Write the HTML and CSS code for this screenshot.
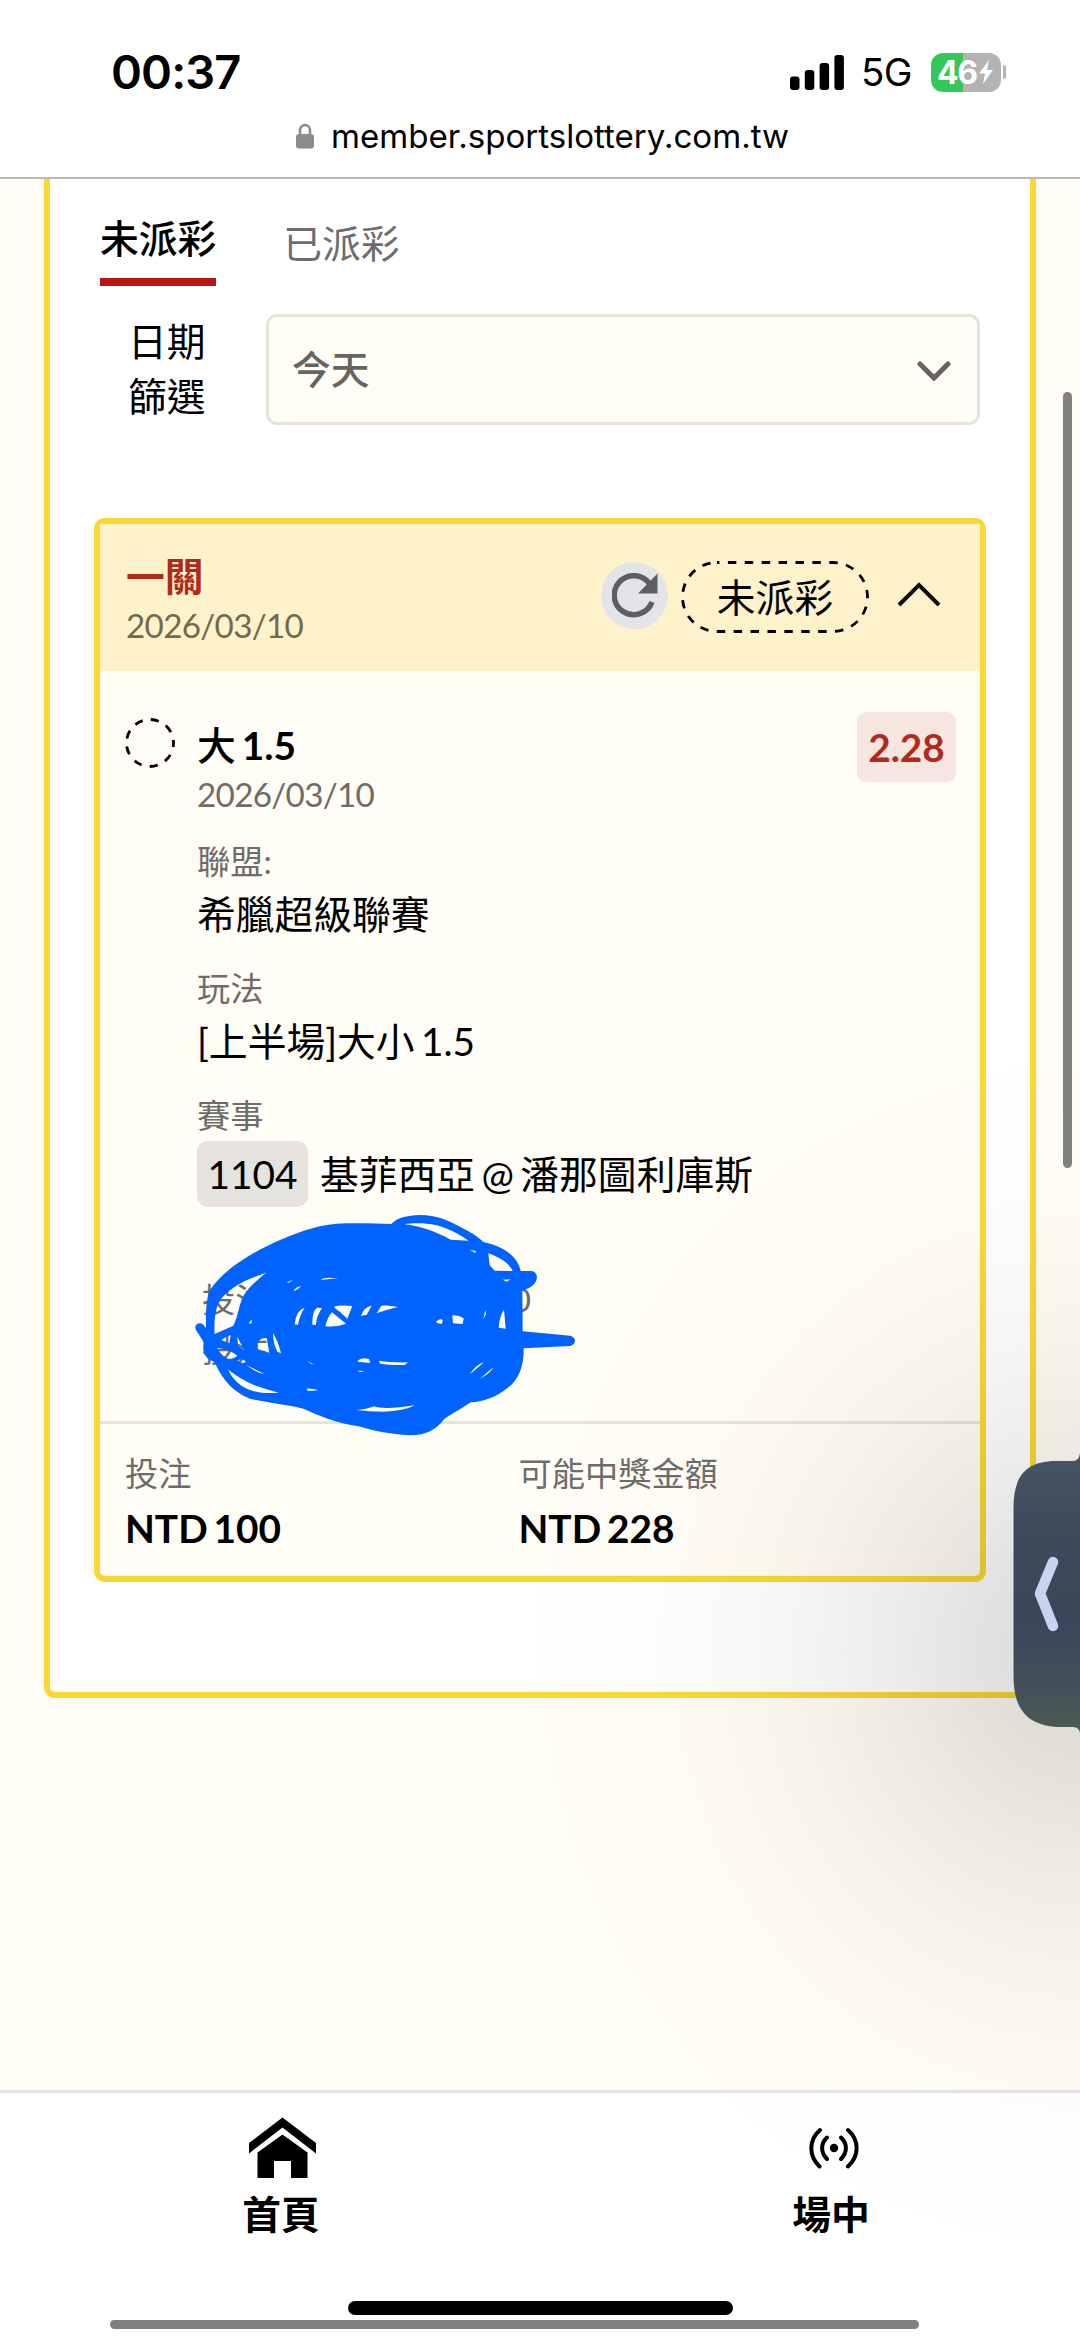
FILE: index.html
```html
<!DOCTYPE html>
<html lang="zh-Hant">
<head>
<meta charset="utf-8">
<title>投注紀錄</title>
<link rel="stylesheet" href="styles.css">
</head>
<body>
<div class="screen">
  <header class="browser">
    <div class="status">
      <span class="clock">00:37</span>
      <div class="status-right">
        <svg class="signal" viewBox="0 0 54 35"><rect x="0" y="21.5" width="9.5" height="13.5" rx="3"/><rect x="14.8" y="15" width="9.5" height="20" rx="3"/><rect x="29.6" y="8" width="9.5" height="27" rx="3"/><rect x="44.4" y="0" width="9.5" height="35" rx="3"/></svg>
        <span class="network">5G</span>
        <div class="battery">
          <span class="level">46</span>
          <svg class="bolt" viewBox="0 0 16 26"><path d="M11 1 1 14.5h6L5 25 15 11H9z" fill="#fff"/></svg>
        </div>
        <i class="nub"></i>
      </div>
    </div>
    <div class="address">
      <svg class="lock" viewBox="0 0 18 26"><path d="M4 12V7.5a5 5.5 0 0 1 10 0V12" fill="none" stroke="#8b8a8f" stroke-width="2.6"/><rect y="11" width="18" height="14.5" rx="3" fill="#8b8a8f"/></svg>
      <span class="url">member.sportslottery.com.tw</span>
    </div>
  </header>

  <main class="page">
    <section class="panel">
      <nav class="tabs">
        <a class="tab active">未派彩</a>
        <a class="tab">已派彩</a>
      </nav>
      <div class="filter">
        <span class="filter-label">日期<br>篩選</span>
        <div class="select">
          <span>今天</span>
          <svg class="caret" viewBox="0 0 34 20"><path d="M3 3 17 17 31 3" fill="none" stroke="#666461" stroke-width="5" stroke-linecap="round"/></svg>
        </div>
      </div>

      <article class="card">
        <div class="card-head">
          <div class="card-title">
            <strong>一關</strong>
            <span class="date">2026/03/10</span>
          </div>
          <span class="refresh"><svg viewBox="0 0 46 46"><path d="M38 11.5A19.5 19.5 0 1 0 40 29" fill="none" stroke="#5d5e60" stroke-width="5.500"/><path d="M45.5.5V20.500H26z" fill="#5d5e60"/></svg></span>
          <span class="pill"><svg viewBox="0 0 188 72"><rect x="1.500" y="1.500" width="185" height="69" rx="34.500" fill="none" stroke="#000" stroke-width="2.800" stroke-dasharray="8.450 8.450" stroke-dashoffset="6"/></svg>未派彩</span>
          <svg class="collapse" viewBox="0 0 44 25"><path d="M2 23 22 3 42 23" fill="none" stroke="#0b0a05" stroke-width="4"/></svg>
        </div>
        <div class="card-body">
          <svg class="pending" viewBox="0 0 50 50"><circle cx="25" cy="25" r="23.500" fill="none" stroke="#000" stroke-width="2.800" stroke-dasharray="8.200 8.200" stroke-dashoffset="4"/></svg>
          <div class="details">
            <strong class="pick"><span class="medium">大</span> 1.5</strong>
            <span class="date">2026/03/10</span>
            <span class="label first">聯盟:</span>
            <span class="value">希臘超級聯賽</span>
            <span class="label">玩法</span>
            <span class="value">[上半場]大小 1.5</span>
            <span class="label">賽事</span>
            <div class="match"><span class="code">1104</span><span>基菲西亞 @ 潘那圖利庫斯</span></div>
            <div class="meta">
              <div class="meta-row"><span>投注</span><span>0</span></div>
              <div class="meta-row"><span>投注</span></div>
              <svg class="scribble" viewBox="0 0 1320 780">
                <path class="ink" fill-rule="evenodd" d="M120 300C160 240 240 190 330 150C400 120 450 105 500 101C560 98 620 101 664 102C680 84 710 76 750 75C800 75 830 90 870 110C900 125 925 140 940 156C1000 168 1044 200 1052 243L1085 243C1105 247 1105 270 1090 284C1080 294 1066 298 1057 302L1058 424L1200 437C1220 441 1220 464 1200 468L1061 475C1062 530 1046 570 1010 596C976 622 940 635 902 637C870 660 836 675 820 690C800 717 770 736 720 736C660 732 606 722 566 709C500 700 446 676 400 656C350 644 290 638 240 626C180 602 155 560 133 516C105 505 96 490 101 456L78 420C70 405 86 393 100 404L108 414C107 360 109 325 120 300Z
                M288 248C230 268 170 295 145 340C134 370 132 400 134 432L190 407C208 370 205 345 222 315C238 290 262 270 288 248Z
                M704 103C750 107 800 126 842 149L896 152C850 120 810 104 770 101C746 99 720 100 704 103Z
                M955 190C990 202 1018 220 1028 243L974 242L959 226Z
                M900 180L918 183L916 189Z
                M998 269L1022 268L1010 275Z
                M452 270Q462 260 505 265Q475 267 452 270Z
                M372 300Q380 290 394 288Q386 297 372 303Z M350 277L370 269L356 278Z
                M374 403Q378 360 404 353Q390 372 384 404Z
                M427 404Q426 362 442 353L456 354Q438 380 438 405Z
                M486 367L528 401Q500 412 466 409Q472 382 486 367Z
                M494 349Q516 345 547 348L532 386Q512 365 494 354Z
                M573 378Q582 350 605 347L590 374Z M620 370L634 347Q660 345 684 351Q650 359 620 370Z
                M798 396Q806 384 818 389L816 401Q806 403 798 396Z M847 376Q865 374 881 385L878 402L849 400Z
                M986 413Q988 380 1002 359L1007 416Z M940 388L946 360L948 372Z
                M236 400L246 388L244 401Z
                M154 450Q170 438 182 436L178 460Z
                M202 440L222 480L204 468Z M262 460Q272 442 290 444L298 488Q276 482 262 477Z
                M309 430Q323 450 333 490L322 485Q309 460 309 430Z
                M142 474Q178 478 202 497Q185 512 170 505Q150 492 142 474Z M203 512Q217 502 229 516L218 520Z
                M175 539Q212 568 250 584Q288 598 326 608C280 612 244 606 215 588Q184 564 175 539Z M229 525L283 552Q260 549 229 525Z
                M563 512Q574 500 597 507L601 519L564 515Z M627 512Q660 518 714 517L704 525Q660 526 630 521Z
                M560 542L585 543L572 546Z M409 596Q420 594 446 601L414 603Z M411 512L433 525L422 521Z M486 522L523 534Z
                M558 660Q590 658 612 649Q630 657 690 652L735 646Q700 664 640 665Q600 665 558 660Z
                M899 553Q916 526 942 516Q928 530 899 553Z M930 566Q954 545 971 531Q960 551 930 566Z"/>
              </svg>
            </div>
          </div>
          <span class="odds">2.28</span>
        </div>
        <footer class="card-foot">
          <div class="sum"><span class="label">投注</span><strong>NTD 100</strong></div>
          <div class="sum"><span class="label">可能中獎金額</span><strong>NTD 228</strong></div>
        </footer>
      </article>
    </section>
  </main>

  <nav class="bottom">
    <a class="bottom-item">
      <svg class="home" viewBox="0 0 67 60"><path d="M33.500 0 67 25.500V36L33.500 10 0 36V25.500zM33.500 17 58.500 35V60.500H42V43.500H25V60.500H8.500V35z"/></svg>
      <span>首頁</span>
    </a>
    <a class="bottom-item">
      <svg class="live" viewBox="0 0 50 42"><circle cx="25" cy="21" r="4.200"/><g fill="none" stroke="#000" stroke-width="4" stroke-linecap="round"><path d="M11 3C-.5 13-.5 29 10.500 39.500M39 3c11.500 10 11.500 26 0 36.500M18 10.500c-6.500 6-6.500 15 0 21.500M32 10.500c6.500 6 6.500 15 0 21.500"/></g></svg>
      <span>場中</span>
    </a>
  </nav>

  <div class="shade"></div>
  <svg class="drawer" viewBox="0 0 67 280">
    <defs><linearGradient id="g" x1="0" y1="0" x2="0" y2="1"><stop offset="0" stop-color="#475461"/><stop offset=".3" stop-color="#3c4a5c"/><stop offset=".6" stop-color="#3a4759"/><stop offset=".83" stop-color="#42505b"/><stop offset="1" stop-color="#4d5c4f"/></linearGradient></defs>
    <path d="M67 0Q66 8 60 8H43C12 8 .5 24 .5 55V222C.5 258 15 271 43 274H60Q66 274 67 280Z" fill="url(#g)"/>
    <path d="M40 109 27 140.500 40 173" fill="none" stroke="#c8d5f0" stroke-width="10.500" stroke-linecap="round" stroke-linejoin="round"/>
  </svg>
  <i class="thumb-y"></i>
  <i class="home-bar"></i>
  <i class="thumb-x"></i>
</div>
</body>
</html>
```

FILE: styles.css
```css
* { box-sizing: border-box; }

body {
  margin: 0;
  background: #fffdf5;
  color: #000;
  font-family: Lato, "Noto Sans CJK TC", sans-serif;
  word-spacing: -3.5px;
}

.screen {
  position: relative;
  display: flex;
  flex-direction: column;
  width: 1080px;
  height: 2337px;
  overflow: hidden;
}

svg { display: block; flex: none; }
i { display: block; }

/* Browser chrome */
.browser {
  flex: none;
  height: 179px;
  padding-top: 44px;
  background: #fff;
  border-bottom: 2px solid #b9b9b9;
  font-family: Inter, sans-serif;
}
.status {
  display: flex;
  justify-content: space-between;
  align-items: center;
  height: 56px;
  padding: 0 74px 0 111px;
}
.clock { margin-top: -2px; font-size: 47px; font-weight: 600; letter-spacing: -0.9px; }
.status-right { display: flex; align-items: center; }
.signal { width: 54px; height: 35px; }
.network { margin-left: 17px; width: 52px; font-size: 38.5px; letter-spacing: -0.6px; line-height: 56px; }
.battery {
  display: flex;
  align-items: center;
  width: 70px;
  height: 39px;
  margin-left: 18px;
  padding-left: 6px;
  border-radius: 12px;
  background: linear-gradient(90deg, #34c759 46%, #b3b3b3 46%);
}
.level { width: 41px; color: #fff; font-size: 32px; font-weight: 700; letter-spacing: -1.5px; line-height: 39px; }
.bolt { width: 16px; height: 26px; }
.nub { width: 3px; height: 14px; margin-left: 2px; border-radius: 0 3px 3px 0; background: #b3b3b3; }
.address { display: flex; align-items: center; height: 44px; margin-top: 14px; padding-left: 296px; }
.lock { width: 18px; height: 26px; }
.url { margin-left: 17px; font-size: 33.1px; line-height: 44px; white-space: nowrap; }

/* History panel */
.page { flex: 1; padding: 0 44px; }
.panel {
  height: 1519px;
  padding: 0 44px;
  background: #fff;
  border: 6px solid #fad733;
  border-top: 0;
  border-radius: 0 0 11px 11px;
}
.tabs { display: flex; gap: 67px; height: 107px; padding-left: 6px; }
.tab { padding-top: 36px; font-size: 38.77px; line-height: 56px; color: #6d6d6d; }
.active { padding-top: 31px; color: #000; font-weight: 500; border-bottom: 8px solid #b91414; }
.filter { display: flex; padding: 28px 6px 0 34px; }
.filter-label { width: 138px; font-size: 38.77px; line-height: 55.4px; margin-top: 0; }
.select {
  display: flex;
  flex: 1;
  align-items: center;
  justify-content: space-between;
  height: 111px;
  padding: 0 26px 0 23px;
  border: 3px solid #e6e3dd;
  border-radius: 11px;
  background: #fffdf5;
  color: #666461;
  font-size: 38.77px;
  font-weight: 500;
}
.select span { margin-top: -5px; }
.caret { width: 34px; height: 20px; margin-top: 2px; }

/* Bet card */
.card {
  height: 1064px;
  margin-top: 93px;
  background: #fffdf5;
  border: 6px solid #fad733;
  border-radius: 11px;
}
.card-head {
  display: flex;
  align-items: flex-start;
  height: 147px;
  padding: 0 39px 0 26px;
  background: #fef2cb;
}
.card-title { display: flex; flex-direction: column; flex: 1; padding-top: 26px; }
.card-title strong { color: #b12a1c; font-size: 38.77px; line-height: 52px; }
.date { color: #6e6c69; font-size: 33.23px; line-height: 46px; letter-spacing: -0.7px; }
.card-title .date { color: #736a4c; }
.refresh {
  display: flex;
  align-items: center;
  justify-content: center;
  width: 67px;
  height: 67px;
  margin-top: 38px;
  border-radius: 50%;
  background: #e3e4e7;
}
.refresh svg { width: 46px; height: 46px; }
.pill {
  position: relative;
  width: 188px;
  height: 72px;
  margin: 37px 28px 0 13px;
  font-size: 38.77px;
  line-height: 72px;
  text-align: center;
}
.pill svg { position: absolute; inset: 0; width: 188px; height: 72px; }
.collapse { width: 44px; height: 25px; margin-top: 58px; }
.card-body { display: flex; align-items: flex-start; height: 750px; padding: 0 24px 0 25px; }
.pending { width: 50px; height: 50px; margin-top: 47px; }
.details { display: flex; flex: 1; flex-direction: column; padding: 47px 0 0 22px; }
.pick { font-size: 38.77px; line-height: 54px; }
.medium { font-weight: 500; }
.pick + .date { margin-top: -1px; }
.label { color: #6e6c69; font-size: 33.23px; line-height: 48px; }
.details .label { margin-top: 23px; }
.details .first { margin-top: 20px; }
.value { padding-top: 2px; font-size: 38.77px; line-height: 54px; white-space: nowrap; }
.match { display: flex; align-items: center; margin-top: 2px; font-size: 38.77px; line-height: 66px; white-space: nowrap; }
.code { width: 111px; height: 66px; margin-right: 12px; border-radius: 11px; background: #e5e3de; text-align: center; }
.meta { position: relative; padding: 67px 0 0 5px; color: #6e6c69; font-size: 33.23px; line-height: 50px; }
.meta-row { display: flex; justify-content: space-between; width: 329px; }
.scribble { position: absolute; left: -27px; top: -17px; width: 440px; height: 260px; }
.ink { fill: #0062ff; }
.odds {
  width: 99px;
  height: 70px;
  margin-top: 41px;
  border-radius: 9px;
  background: #f7e6e0;
  color: #b12a1c;
  font-size: 38.77px;
  font-weight: 700;
  line-height: 70px;
  text-align: center;
}
.card-foot { display: flex; height: 155px; padding: 25px 0 0 25px; border-top: 3px solid #e5e3de; }
.sum { display: flex; flex-direction: column; width: 393.5px; }
.sum strong { margin-top: 4px; font-size: 38.77px; line-height: 54px; }

/* Bottom navigation */
.bottom {
  display: flex;
  flex: none;
  height: 247px;
  padding-left: 6px;
  background: #fff;
  border-top: 3px solid #e6e6e4;
}
.bottom-item {
  display: flex;
  flex: none;
  flex-direction: column;
  align-items: center;
  width: 550px;
  padding-top: 24px;
  font-size: 38.77px;
  font-weight: 700;
  line-height: 56px;
}
.home { width: 67px; height: 61px; margin-left: 3px; }
.live { width: 50px; height: 42px; margin: 10px 0 9px 5px; }
.bottom-item span { margin-top: 8px; }

/* Floating drawer handle, its soft shade and the scroll indicators */
.shade {
  position: absolute;
  left: 480px;
  top: 950px;
  width: 600px;
  height: 1300px;
  background: radial-gradient(ellipse 590px 640px at 100% 54%, rgba(0,0,0,.14), rgba(0,0,0,.122) 14%, rgba(0,0,0,.073) 32%, rgba(0,0,0,.035) 50%, rgba(0,0,0,.013) 68%, rgba(0,0,0,.004) 84%, transparent);
}
.drawer { position: absolute; right: 0; top: 1453px; width: 67px; height: 280px; }
.thumb-y { position: absolute; left: 1063px; top: 392px; width: 9px; height: 776px; border-radius: 5px; background: #80807d; }
.home-bar { position: absolute; left: 348px; top: 2301px; width: 385px; height: 14px; border-radius: 7px; background: #000; }
.thumb-x { position: absolute; left: 110px; top: 2320px; width: 809px; height: 9px; border-radius: 5px; background: #808080; }
```
